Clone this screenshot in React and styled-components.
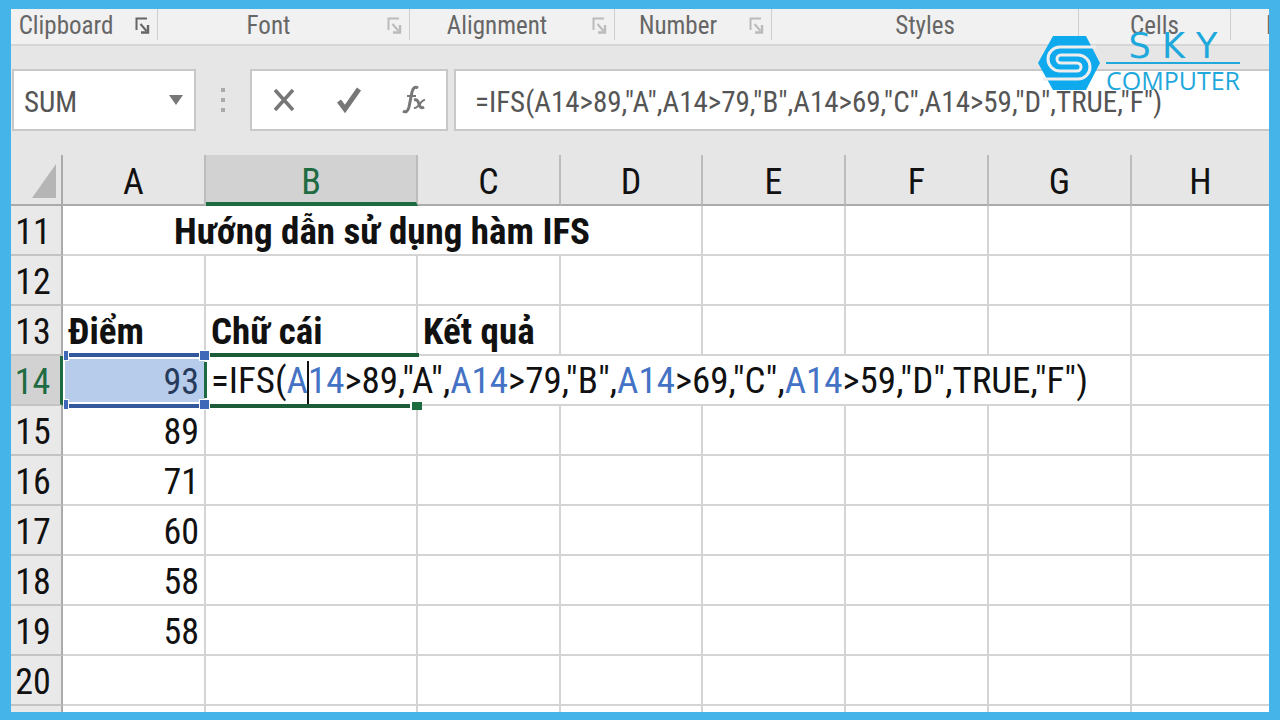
import React, { useState } from 'react';
import styled, { createGlobalStyle } from 'styled-components';

const GlobalStyle = createGlobalStyle`
  * {
    box-sizing: border-box;
  }
  body {
    margin: 0;
    font-family: 'Roboto Condensed', 'Liberation Sans', sans-serif;
    color: #111;
  }
`;

const Frame = styled.div`
  display: flex;
  min-height: 100vh;
  padding: 9px 11px 8px;
  background: #45b4e9;
`;

const Window = styled.main`
  position: relative;
  flex: 1;
  min-width: 0;
  overflow: hidden;
  display: flex;
  flex-direction: column;
  background: #e6e6e6;
`;

const Ribbon = styled.div`
  display: flex;
  height: 37px;
  margin-left: -6px;
  padding-bottom: 4px;
  background: #f1f1f1;
  border-bottom: 2px solid #d6d6d6;
`;

const Group = styled.div`
  display: flex;
  align-items: center;
  flex: ${(p) => (p.$width ? `0 0 ${p.$width}px` : '1')};
  min-width: 0;
  overflow: hidden;
  padding-left: ${(p) => (p.$width ? 0 : 35)}px;
  border-right: ${(p) => (p.$width ? '1px solid #cfcfcf' : 'none')};
`;

const GroupLabel = styled.span`
  flex: 1;
  padding-top: 2px;
  text-align: ${(p) => (p.$start ? 'left' : 'center')};
  font-size: 25px;
  line-height: 30px;
  color: #666;
`;

const Launcher = styled.button`
  display: flex;
  align-items: center;
  justify-content: center;
  width: 30px;
  height: 24px;
  padding: 2px 0 0;
  border: 0;
  background: none;
  color: ${(p) => (p.$active ? '#666' : '#bbb')};
`;

const FormulaRow = styled.div`
  display: flex;
  align-items: center;
  height: 109px;
  padding: 0 0 1px 1px;
`;

const Box = styled.div`
  display: flex;
  align-items: center;
  height: 62px;
  background: #fff;
  border: 2px solid #c8c8c8;
`;

const NameBox = styled(Box)`
  width: 184px;
  padding: 0 8px 0 10px;
`;

const BarInput = styled.input`
  flex: 1;
  min-width: 0;
  height: 44px;
  padding: 4px 0 0;
  border: 0;
  outline: 0;
  background: none;
  color: #555;
  font-family: inherit;
  font-size: 29px;
`;

const IconButton = styled.button`
  display: flex;
  justify-content: center;
  align-items: center;
  width: ${(p) => p.$width || 65}px;
  height: 40px;
  padding: 0;
  border: 0;
  background: none;
  color: #777;
`;

const Grip = styled.div`
  display: flex;
  flex-direction: column;
  align-items: center;
  gap: 6px;
  width: 54px;
`;

const Dot = styled.span`
  width: 4px;
  height: 4px;
  background: #aaa;
`;

const Tools = styled(Box)`
  width: 198px;
  margin-right: 6px;
`;

const FormulaBox = styled(Box)`
  flex: 1;
  min-width: 0;
  border-right: 0;
  padding-left: 19px;
`;

const Sheet = styled.table`
  width: 100%;
  table-layout: fixed;
  border-collapse: separate;
  border-spacing: 0;
  font-size: 36px;
  line-height: 40px;
`;

const Corner = styled.td`
  height: 51px;
  padding: 2px 0 0;
  border-right: 2px solid #ababab;
  border-bottom: 2px solid #ababab;

  svg {
    display: block;
    margin-left: 20px;
  }
`;

const ColHead = styled.th`
  height: 51px;
  padding: ${(p) => (p.$active ? 6 : 4)}px 0 0;
  font-weight: 400;
  color: ${(p) => (p.$active ? '#1f6b42' : '#111')};
  background: ${(p) => (p.$active ? '#d2d2d2' : '#e6e6e6')};
  border-right: 2px solid #bcbcbc;
  border-bottom: ${(p) => (p.$active ? '4px solid #1d6b40' : '2px solid #ababab')};

  &:last-child {
    border-right: 0;
  }
`;

const RowHead = styled.th`
  height: ${(p) => (p.$partial ? 6 : 50)}px;
  padding: ${(p) => (p.$partial ? 0 : '4px 6px 0 0')};
  font-weight: 400;
  color: ${(p) => (p.$active ? '#1f6b42' : '#111')};
  background: ${(p) => (p.$active ? '#d2d2d2' : '#e9e9e9')};
  border-right: ${(p) => (p.$active ? '3px solid #1d6b40' : '2px solid #ababab')};
  border-bottom: ${(p) => (p.$partial ? 0 : 2)}px solid #c4c4c4;
`;

const Cell = styled.td`
  position: relative;
  z-index: ${(p) => (p.$picked ? 2 : p.$editing ? 1 : 'auto')};
  height: ${(p) => (p.$partial ? 6 : 50)}px;
  padding: ${(p) => (p.$partial ? 0 : '4px 5px 0')};
  white-space: nowrap;
  text-align: ${(p) => p.$align || 'left'};
  font-size: ${(p) => (p.$align === 'right' ? 36 : 37)}px;
  font-weight: ${(p) => (p.$bold ? 700 : 400)};
  background: ${(p) => (p.$picked ? '#b7cbea' : '#fff')};
  color: ${(p) => (p.$picked ? '#263a5c' : '#111')};
  border-right: 2px solid #d4d4d4;
  border-bottom: ${(p) => (p.$partial ? 0 : 2)}px solid #d4d4d4;

  &:last-child {
    border-right: 0;
  }
`;

const PickedFrame = styled.span`
  position: absolute;
  inset: -3px -3px -4px 0;
  border: solid #33589c;
  border-width: 4px 0;
  box-shadow: inset 0 0 0 2px #fff;
`;

const Handle = styled.i`
  position: absolute;
  width: ${(p) => (p.$right ? 11 : 6)}px;
  height: 11px;
  background: #3f68b8;
  border: 1px solid #fff;
  ${(p) => (p.$right ? 'right: -6px;' : 'left: 0;')}
  ${(p) => (p.$bottom ? 'bottom: -6px;' : 'top: -6px;')}
`;

const EditFrame = styled.span`
  position: absolute;
  top: -3px;
  bottom: -4px;
  left: 0;
  width: 213px;
  border: solid #1d5c38;
  border-width: 4px 0;

  &::before {
    content: '';
    position: absolute;
    top: 6px;
    bottom: 6px;
    left: -3px;
    width: 3px;
    background: #1d6b40;
  }

  &::after {
    content: '';
    position: absolute;
    right: -3px;
    bottom: -6px;
    width: 10px;
    height: 8px;
    background: #1d6b40;
    border: solid #fff;
    border-width: 0 0 0 2px;
  }
`;

/* the green edge of the edited cell runs over the end of the blue frame */
const EditEdge = styled.b`
  position: absolute;
  top: 6px;
  bottom: 6px;
  right: -3px;
  width: 3px;
  background: #1d6b40;
`;

const Ref = styled.span`
  color: #4472c4;
`;

const Caret = styled.span`
  display: inline-block;
  width: 2px;
  height: 46px;
  margin: -4px -1px;
  vertical-align: middle;
  background: #111;
`;

const Logo = styled.div`
  position: absolute;
  top: 21px;
  right: 29px;
  display: flex;
  align-items: center;
  gap: 6px;
  color: #1fa8dc;
`;

const LogoText = styled.div`
  display: flex;
  flex-direction: column;
  align-items: center;
`;

const Sky = styled.span`
  font-family: 'DejaVu Sans', sans-serif;
  font-size: 35px;
  line-height: 32px;
`;

const Computer = styled.span`
  border-top: 2px solid #1fa8dc;
  font-family: 'Open Sans', sans-serif;
  font-size: 25px;
  line-height: 32px;
`;

const groups = [
  { name: 'Clipboard', width: 153, launcher: true, active: true },
  { name: 'Font', width: 252, launcher: true },
  { name: 'Alignment', width: 205, launcher: true },
  { name: 'Number', width: 157, launcher: true },
  { name: 'Styles', width: 307 },
  { name: 'Cells', width: 152 },
  { name: 'Editing' },
];

const columns = ['A', 'B', 'C', 'D', 'E', 'F', 'G', 'H'];
const widths = [143, 212, 143, 142, 143, 143, 143];

const rows = [
  { n: 11, cells: [{ v: 'Hướng dẫn sử dụng hàm IFS', span: 4, bold: true, align: 'center' }] },
  { n: 12, cells: [] },
  {
    n: 13,
    cells: [
      { v: 'Điểm', bold: true },
      { v: 'Chữ cái', bold: true },
      { v: 'Kết quả', bold: true },
    ],
  },
  { n: 14, active: true, cells: [{ v: 93, align: 'right', picked: true }, { editing: true, span: 6 }] },
  { n: 15, cells: [{ v: 89, align: 'right' }] },
  { n: 16, cells: [{ v: 71, align: 'right' }] },
  { n: 17, cells: [{ v: 60, align: 'right' }] },
  { n: 18, cells: [{ v: 58, align: 'right' }] },
  { n: 19, cells: [{ v: 58, align: 'right' }] },
  { n: 20, cells: [] },
  { n: '', partial: true, cells: [] },
];

// pad a row with empty cells up to column H
const fillRow = (cells) => {
  const used = cells.reduce((sum, c) => sum + (c.span || 1), 0);
  return [...cells, ...Array.from({ length: columns.length - used }, () => ({}))];
};

const LauncherIcon = () => (
  <svg width="15" height="17" viewBox="0 0 15 17" fill="none" stroke="currentColor">
    <path d="M1.5 13V1.5H12" strokeWidth="2" />
    <path d="M5.5 7l6 7" strokeWidth="2" />
    <path d="M13 8v7.5H6" strokeWidth="2.4" />
  </svg>
);

const SkyMark = () => (
  <svg width="63" height="56" viewBox="0 0 63 56">
    <path d="M16 1h33l14 27-14 27H16L1 28z" fill="#0fa9ee" />
    <path
      d="M59 12H23a12 12 0 0 0 0 24h17a4 4 0 0 0 0-8H24a4 4 0 0 1 0-8h17a12 12 0 0 1 0 24H6"
      fill="none"
      stroke="#eee"
      strokeWidth="3"
    />
  </svg>
);

const Formula = () => (
  <>
    =IFS(<Ref>A</Ref>
    <Caret />
    <Ref>14</Ref>&gt;89,"A",<Ref>A14</Ref>&gt;79,"B",<Ref>A14</Ref>&gt;69,"C",<Ref>A14</Ref>
    &gt;59,"D",TRUE,"F")
  </>
);

const App = () => {
  const [name, setName] = useState('SUM');
  const [formula, setFormula] = useState('=IFS(A14>89,"A",A14>79,"B",A14>69,"C",A14>59,"D",TRUE,"F")');

  return (
    <Frame>
      <GlobalStyle />
      <Window>
        <Ribbon>
          {groups.map((g) => (
            <Group key={g.name} $width={g.width}>
              <GroupLabel $start={!g.width}>{g.name}</GroupLabel>
              {g.launcher && (
                <Launcher $active={g.active} aria-label={g.name + ' settings'}>
                  <LauncherIcon />
                </Launcher>
              )}
            </Group>
          ))}
        </Ribbon>

        <FormulaRow>
          <NameBox>
            <BarInput aria-label="Name box" value={name} onChange={(e) => setName(e.target.value)} />
            <IconButton $width={20} aria-label="Open name list">
              <svg width="14" height="10" viewBox="0 0 14 10">
                <path d="M0 0h14L7 10z" fill="currentColor" />
              </svg>
            </IconButton>
          </NameBox>
          <Grip>
            <Dot />
            <Dot />
            <Dot />
          </Grip>
          <Tools>
            <IconButton aria-label="Cancel">
              <svg width="22" height="24" viewBox="0 0 22 24" fill="none" stroke="currentColor" strokeWidth="3.500">
                <path d="M2 2l18 20M20 2L2 22" />
              </svg>
            </IconButton>
            <IconButton aria-label="Enter">
              <svg width="26" height="26" viewBox="0 0 26 26" fill="none" stroke="currentColor" strokeWidth="5">
                <path d="M3 14l6 8L23 2" />
              </svg>
            </IconButton>
            <IconButton aria-label="Insert function">
              <svg width="24" height="30" viewBox="0 0 24 30" fill="none" stroke="currentColor">
                <path d="M1 26c3 2 5 0 6-4l3-15c1-4 3-6 6-4" strokeWidth="3" />
                <path d="M5 11h9" strokeWidth="2" />
                <path d="M12 15c3-1 4 1 5 4s2 5 5 3" strokeWidth="3" />
                <path d="M23 15c-4-1-6 9-11 8" strokeWidth="2" />
              </svg>
            </IconButton>
          </Tools>
          <FormulaBox>
            <BarInput aria-label="Formula bar" value={formula} onChange={(e) => setFormula(e.target.value)} />
          </FormulaBox>
        </FormulaRow>

        <Sheet>
          <colgroup>
            <col width="52" />
            {widths.map((w, i) => (
              <col key={columns[i]} width={w} />
            ))}
            <col />
          </colgroup>
          <thead>
            <tr>
              <Corner>
                <svg width="26" height="34" viewBox="0 0 26 34">
                  <path d="M25 0v34H1z" fill="#b5b5b5" />
                </svg>
              </Corner>
              {columns.map((c) => (
                <ColHead key={c} $active={c === 'B'}>
                  {c}
                </ColHead>
              ))}
            </tr>
          </thead>
          <tbody>
            {rows.map((row) => (
              <tr key={row.n}>
                <RowHead $active={row.active} $partial={row.partial}>
                  {row.n}
                </RowHead>
                {fillRow(row.cells).map((c, i) => (
                  <Cell
                    key={i}
                    colSpan={c.span}
                    $bold={c.bold}
                    $align={c.align}
                    $picked={c.picked}
                    $editing={c.editing}
                    $partial={row.partial}
                  >
                    {c.editing ? <Formula /> : c.v}
                    {c.editing && <EditFrame />}
                    {c.picked && (
                      <>
                        <PickedFrame />
                        <EditEdge />
                        <Handle />
                        <Handle $right />
                        <Handle $bottom />
                        <Handle $right $bottom />
                      </>
                    )}
                  </Cell>
                ))}
              </tr>
            ))}
          </tbody>
        </Sheet>

        <Logo>
          <SkyMark />
          <LogoText>
            <Sky>S K Y</Sky>
            <Computer>COMPUTER</Computer>
          </LogoText>
        </Logo>
      </Window>
    </Frame>
  );
};

export default App;
